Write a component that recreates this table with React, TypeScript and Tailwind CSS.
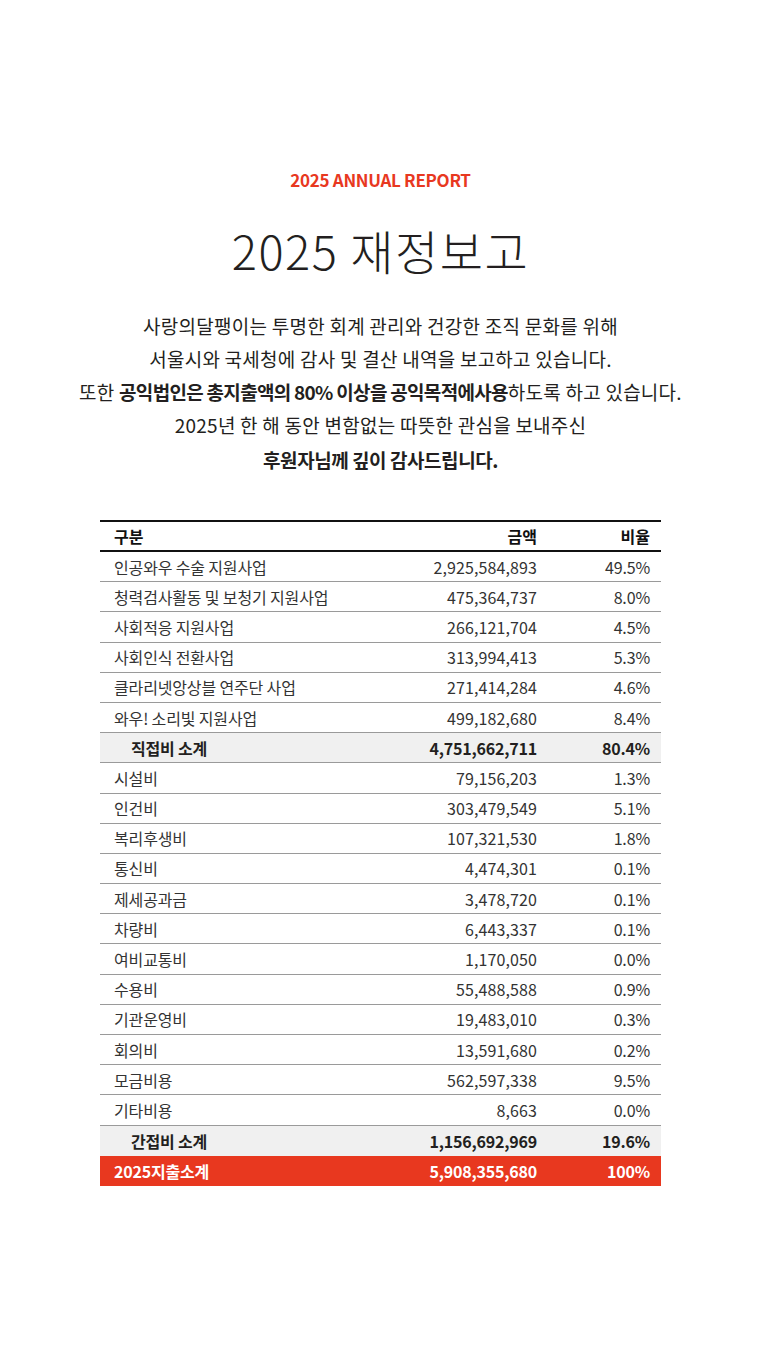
import React from "react";

const rows1 = [
  ["인공와우 수술 지원사업", "2,925,584,893", "49.5%"],
  ["청력검사활동 및 보청기 지원사업", "475,364,737", "8.0%"],
  ["사회적응 지원사업", "266,121,704", "4.5%"],
  ["사회인식 전환사업", "313,994,413", "5.3%"],
  ["클라리넷앙상블 연주단 사업", "271,414,284", "4.6%"],
  ["와우! 소리빛 지원사업", "499,182,680", "8.4%"],
];
const rows2 = [
  ["시설비", "79,156,203", "1.3%"],
  ["인건비", "303,479,549", "5.1%"],
  ["복리후생비", "107,321,530", "1.8%"],
  ["통신비", "4,474,301", "0.1%"],
  ["제세공과금", "3,478,720", "0.1%"],
  ["차량비", "6,443,337", "0.1%"],
  ["여비교통비", "1,170,050", "0.0%"],
  ["수용비", "55,488,588", "0.9%"],
  ["기관운영비", "19,483,010", "0.3%"],
  ["회의비", "13,591,680", "0.2%"],
  ["모금비용", "562,597,338", "9.5%"],
  ["기타비용", "8,663", "0.0%"],
];

function Row({ r }: { r: string[] }) {
  return (
    <div className="flex items-center h-[30.2px] border-b border-[#9a9a9a] text-[16px] tracking-[-0.15px] text-[#333]">
      <div className="flex-1 pl-[14px]">{r[0]}</div>
      <div className="w-[200px] text-right tracking-[0.1px]">{r[1]}</div>
      <div className="w-[124px] text-right pr-[11px]">{r[2]}</div>
    </div>
  );
}

function Sub({ r, border }: { r: string[]; border: boolean }) {
  return (
    <div
      className={
        "flex items-center h-[30.2px] bg-[#f0f0f0] text-[16px] tracking-[-0.2px] font-bold text-[#231f20] " +
        (border ? "border-b border-[#9a9a9a]" : "")
      }
    >
      <div className="flex-1 pl-[31px]">{r[0]}</div>
      <div className="w-[200px] text-right">{r[1]}</div>
      <div className="w-[124px] text-right pr-[11px]">{r[2]}</div>
    </div>
  );
}

export default function App() {
  return (
    <div
      className="w-[761px] h-[1361px] bg-white text-[#231f20]"
      style={{ fontFamily: '"Noto Sans CJK KR", "Noto Sans", sans-serif' }}
    >
      <div className="pt-[168px] text-center text-[17px] font-semibold text-[#e8381f] leading-[24px] tracking-[-0.3px]">
        2025 ANNUAL REPORT
      </div>
      <div className="mt-[30px] text-center text-[47px] font-light leading-[56px] tracking-[1.5px] text-[#231f20]">
        2025 재정보고
      </div>
      <div className="mt-[31px] text-center text-[19px] leading-[33px] tracking-[0.25px] text-[#231f20]">
        <div>사랑의달팽이는 투명한 회계 관리와 건강한 조직 문화를 위해</div>
        <div>서울시와 국세청에 감사 및 결산 내역을 보고하고 있습니다.</div>
        <div>
          또한 <b className="tracking-[-0.7px]">공익법인은 총지출액의 80% 이상을 공익목적에사용</b>하도록 하고 있습니다.
        </div>
        <div>2025년 한 해 동안 변함없는 따뜻한 관심을 보내주신</div>
        <div className="mt-[2px] font-bold tracking-[-0.45px]">후원자님께 깊이 감사드립니다.</div>
      </div>
      <div className="mx-[100px] mt-[44px]">
        <div className="flex items-center h-[32px] border-t-2 border-b-2 border-[#111] text-[16px] font-bold text-[#111]">
          <div className="flex-1 pl-[14px]">구분</div>
          <div className="w-[200px] text-right">금액</div>
          <div className="w-[124px] text-right pr-[11px]">비율</div>
        </div>
        {rows1.map((r) => (
          <Row key={r[0]} r={r} />
        ))}
        <Sub r={["직접비 소계", "4,751,662,711", "80.4%"]} border />
        {rows2.map((r) => (
          <Row key={r[0]} r={r} />
        ))}
        <Sub r={["간접비 소계", "1,156,692,969", "19.6%"]} border={false} />
        <div className="flex items-center h-[30px] bg-[#e8381f] text-[16px] tracking-[-0.2px] font-bold text-white">
          <div className="flex-1 pl-[14px]">2025지출소계</div>
          <div className="w-[200px] text-right">5,908,355,680</div>
          <div className="w-[124px] text-right pr-[11px]">100%</div>
        </div>
      </div>
    </div>
  );
}
